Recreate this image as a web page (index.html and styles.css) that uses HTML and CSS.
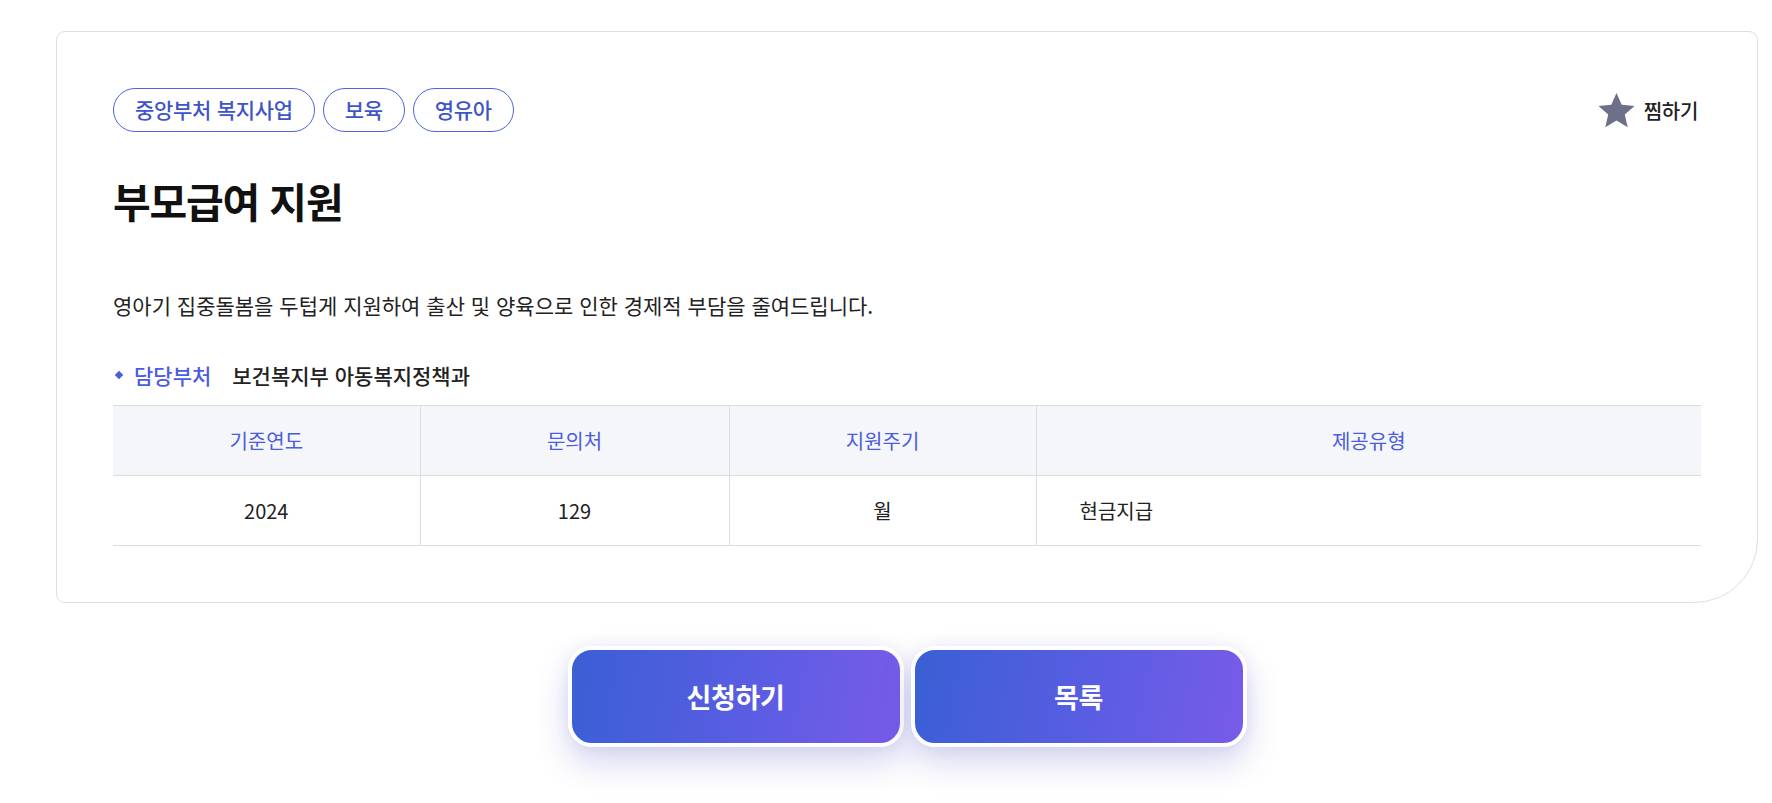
FILE: index.html
```html
<!DOCTYPE html>
<html lang="ko">
<head>
<meta charset="utf-8">
<title>부모급여 지원</title>
<link rel="stylesheet" href="styles.css">
</head>
<body>
<main class="page">
  <section class="card">
    <div class="top-row">
      <ul class="tags">
        <li class="tag">중앙부처 복지사업</li>
        <li class="tag">보육</li>
        <li class="tag">영유아</li>
      </ul>
      <button class="like" type="button">
        <svg class="star" viewBox="0 0 24 24" width="39" height="39" aria-hidden="true">
          <path d="M12 1.2l3.2 7.3 7.9.7-6 5.3 1.8 7.8L12 18.2l-6.9 4.1 1.8-7.8-6-5.3 7.9-.7z" fill="#6d7088"/>
        </svg>
        <span class="like-text">찜하기</span>
      </button>
    </div>
    <h1 class="title">부모급여 지원</h1>
    <p class="desc">영아기 집중돌봄을 두텁게 지원하여 출산 및 양육으로 인한 경제적 부담을 줄여드립니다.</p>
    <div class="dept">
      <span class="dot"></span>
      <span class="dept-label">담당부처</span>
      <span class="dept-value">보건복지부 아동복지정책과</span>
    </div>
    <table class="info">
      <colgroup>
        <col class="c1"><col class="c2"><col class="c3"><col class="c4">
      </colgroup>
      <thead>
        <tr><th>기준연도</th><th>문의처</th><th>지원주기</th><th>제공유형</th></tr>
      </thead>
      <tbody>
        <tr><td>2024</td><td>129</td><td>월</td><td class="left">현금지급</td></tr>
      </tbody>
    </table>
  </section>
  <div class="actions">
    <button class="btn" type="button">신청하기</button>
    <button class="btn" type="button">목록</button>
  </div>
</main>
</body>
</html>
```

FILE: styles.css
```css
* { box-sizing: border-box; }
html, body { margin: 0; padding: 0; background: #fff; }
body {
  font-family: "Noto Sans CJK KR", "Noto Sans", sans-serif;
  color: #222;
}
.page {
  width: 1702px;
  margin-left: 56px;
  padding-top: 31px;
  padding-bottom: 57px;
}
.card {
  border: 1px solid #dfdfe2;
  border-radius: 9px 9px 64px 9px;
  padding: 56px 56px 56px 56px;
  background: #fff;
}
.top-row {
  display: flex;
  justify-content: space-between;
  align-items: center;
  height: 44px;
}
.tags {
  display: flex;
  gap: 8px;
  list-style: none;
  margin: 0;
  padding: 0;
}
.tag {
  height: 44px;
  padding: 0 21px;
  border: 1px solid #4b66d9;
  border-radius: 22px;
  color: #3f54c8;
  font-size: 21px;
  letter-spacing: -0.3px;
  line-height: 41px;
  font-weight: 500;
}
.like {
  display: flex;
  align-items: center;
  gap: 8px;
  border: 0;
  background: none;
  padding: 0;
  margin-right: 3px;
  font-family: inherit;
  cursor: pointer;
}
.star { display: block; }
.like-text {
  font-size: 20px;
  letter-spacing: -0.3px;
  color: #222;
  font-weight: 500;
}
.title {
  margin: 42px 0 0;
  font-size: 41px;
  line-height: 52px;
  font-weight: 700;
  letter-spacing: -1.2px;
  color: #111;
}
.desc {
  margin: 64px 0 0;
  font-size: 21px;
  line-height: 30px;
  letter-spacing: 0;
  color: #222;
}
.dept {
  margin-top: 40px;
  display: flex;
  align-items: center;
  height: 30px;
  font-size: 21px;
  letter-spacing: 0;
  line-height: 30px;
}
.dot {
  width: 6px;
  height: 6px;
  background: #4a5ce0;
  transform: rotate(45deg);
  margin: 0 12px 0 3px;
}
.dept-label {
  color: #4a5ce0;
  font-weight: 500;
  margin-right: 21px;
}
.dept-value {
  color: #222;
  font-weight: 500;
}
.info {
  margin-top: 15px;
  width: 100%;
  border-collapse: collapse;
  table-layout: fixed;
  font-size: 20px;
}
.c1 { width: 307px; }
.c2 { width: 309px; }
.c3 { width: 307px; }
.info th, .info td {
  height: 70px;
  text-align: center;
  border-top: 1px solid #dcdcdf;
  border-bottom: 1px solid #dcdcdf;
  border-left: 1px solid #dcdcdf;
  padding: 0;
}
.info th:first-child, .info td:first-child { border-left: 0; }
.info th {
  background: #f5f6fa;
  color: #4a5ce0;
  font-weight: 400;
}
.info td {
  color: #222;
  font-weight: 400;
}
.info td.left {
  text-align: left;
  padding-left: 43px;
}
.actions {
  display: flex;
  justify-content: center;
  gap: 7px;
  margin-top: 43px;
}
.btn {
  width: 336px;
  height: 101px;
  border: 4px solid #fff;
  border-radius: 24px;
  background: linear-gradient(100deg, #3a5fd5 0%, #5a5de2 55%, #785be9 100%);
  color: #fff;
  font-family: inherit;
  font-size: 27px;
  font-weight: 700;
  letter-spacing: -0.3px;
  box-shadow: 0 16px 32px rgba(85, 85, 195, 0.24), 0 0 14px rgba(120, 120, 200, 0.12);
  cursor: pointer;
}
```
